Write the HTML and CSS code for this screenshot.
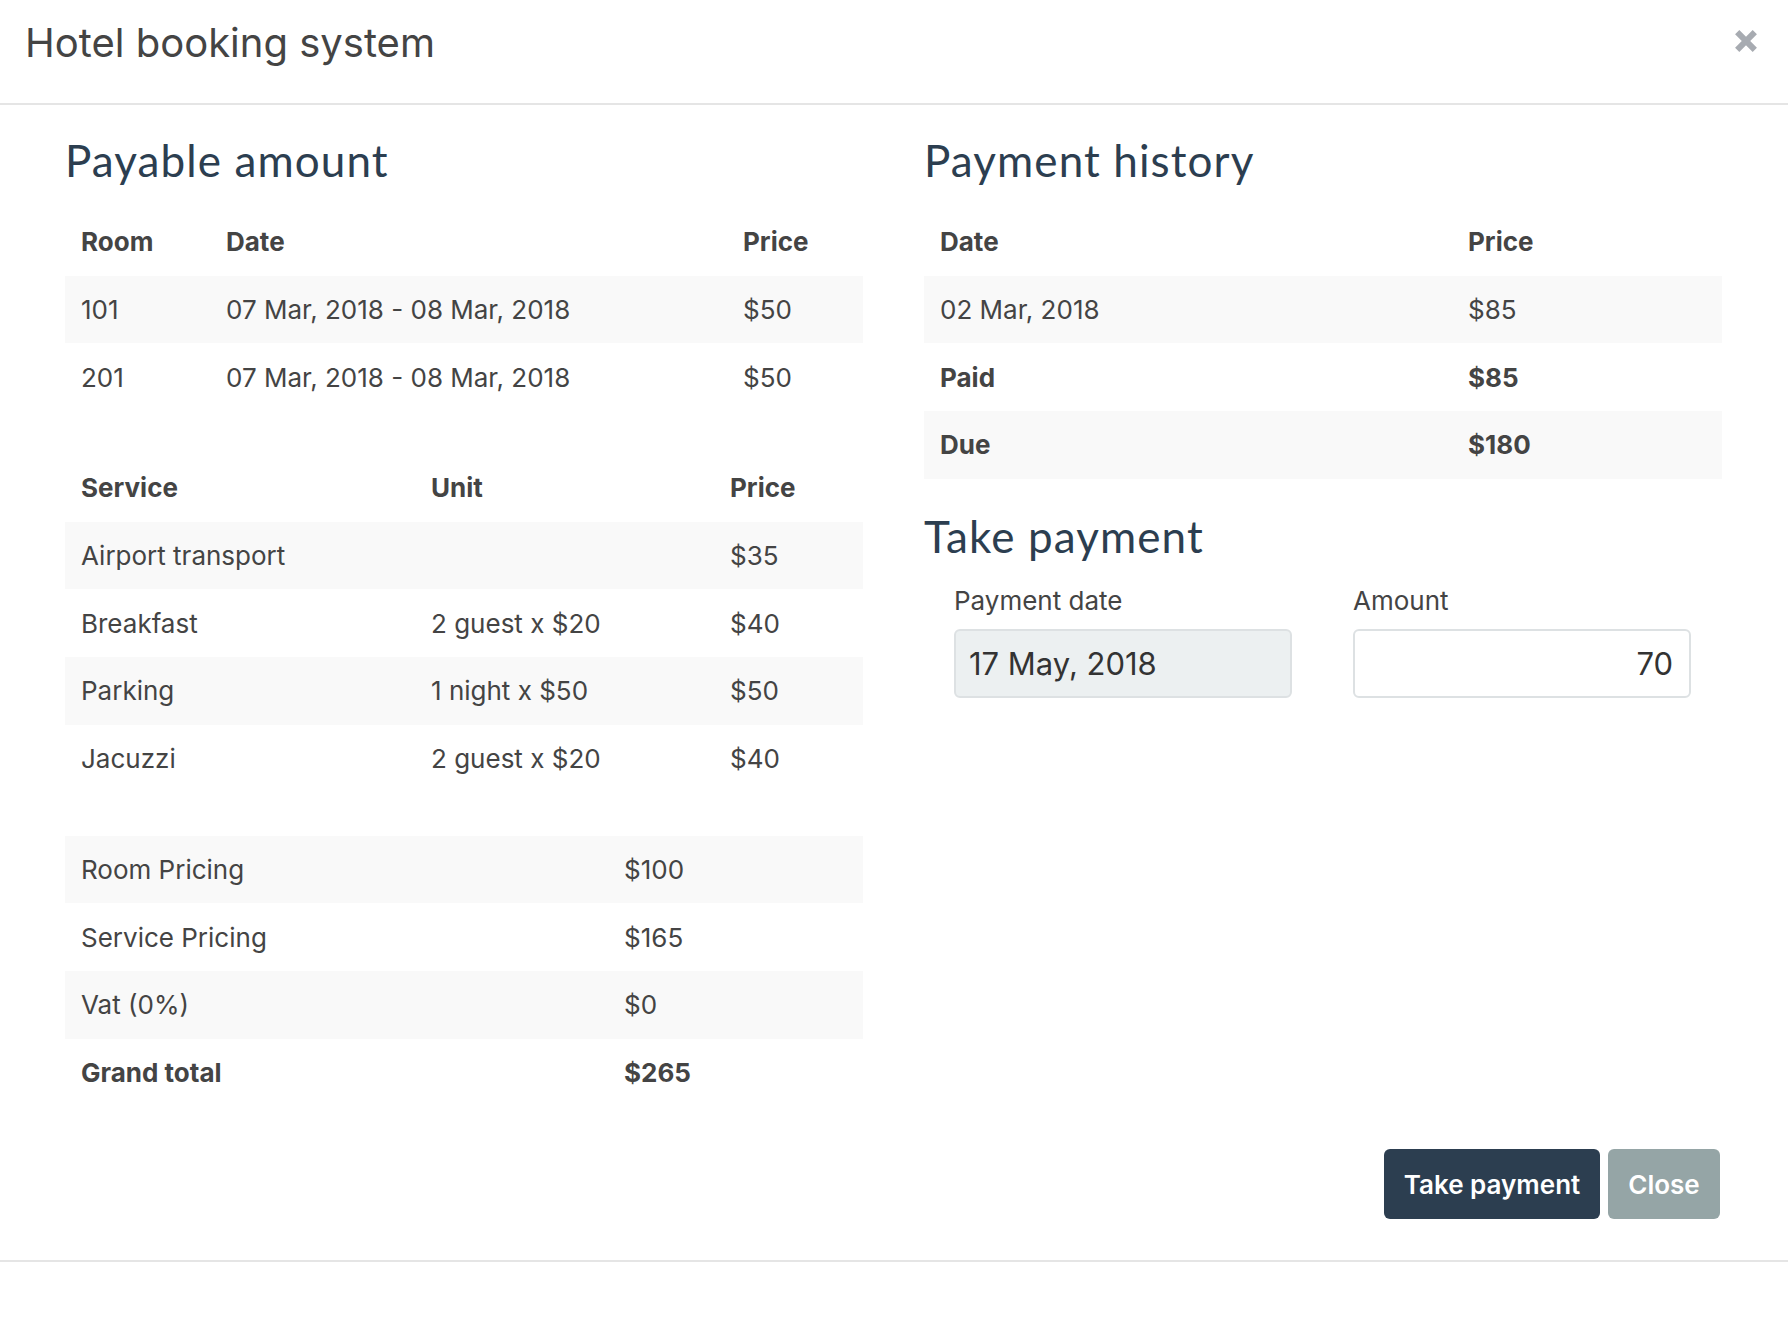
FILE: index.html
```html
<!DOCTYPE html>
<html lang="en">
<head>
<meta charset="utf-8">
<title>Hotel booking system</title>
<link rel="stylesheet" href="styles.css">
</head>
<body>
<div class="modal">
  <header class="modal-header">
    <h1 class="modal-title">Hotel booking system</h1>
    <button class="close" type="button" aria-label="Close">
      <svg width="22" height="22" viewBox="0 0 22 22"><path d="M2.2 2.2 L19.8 19.8 M19.8 2.2 L2.2 19.8" stroke="#a7abb1" stroke-width="6" fill="none"/></svg>
    </button>
  </header>
  <div class="modal-body">
    <div class="cols">
      <section class="col">
        <h2 class="heading">Payable amount</h2>
        <table class="tbl">
          <colgroup><col style="width:145px"><col style="width:517px"><col style="width:136px"></colgroup>
          <thead><tr><th>Room</th><th>Date</th><th>Price</th></tr></thead>
          <tbody>
            <tr><td>101</td><td>07 Mar, 2018 - 08 Mar, 2018</td><td>$50</td></tr>
            <tr><td>201</td><td>07 Mar, 2018 - 08 Mar, 2018</td><td>$50</td></tr>
          </tbody>
        </table>
        <table class="tbl">
          <colgroup><col style="width:350px"><col style="width:299px"><col style="width:149px"></colgroup>
          <thead><tr><th>Service</th><th>Unit</th><th>Price</th></tr></thead>
          <tbody>
            <tr><td>Airport transport</td><td></td><td>$35</td></tr>
            <tr><td>Breakfast</td><td>2 guest x $20</td><td>$40</td></tr>
            <tr><td>Parking</td><td>1 night x $50</td><td>$50</td></tr>
            <tr><td>Jacuzzi</td><td>2 guest x $20</td><td>$40</td></tr>
          </tbody>
        </table>
        <table class="tbl">
          <colgroup><col style="width:543px"><col style="width:255px"></colgroup>
          <tbody>
            <tr><td>Room Pricing</td><td>$100</td></tr>
            <tr><td>Service Pricing</td><td>$165</td></tr>
            <tr><td>Vat (0%)</td><td>$0</td></tr>
            <tr class="strong"><td>Grand total</td><td>$265</td></tr>
          </tbody>
        </table>
      </section>
      <section class="col">
        <h2 class="heading">Payment history</h2>
        <table class="tbl tbl-history">
          <colgroup><col style="width:528px"><col style="width:270px"></colgroup>
          <thead><tr><th>Date</th><th>Price</th></tr></thead>
          <tbody>
            <tr><td>02 Mar, 2018</td><td>$85</td></tr>
            <tr class="strong"><td>Paid</td><td>$85</td></tr>
            <tr class="strong"><td>Due</td><td>$180</td></tr>
          </tbody>
        </table>
        <h2 class="heading heading-sub">Take payment</h2>
        <div class="form-row">
          <div class="form-group">
            <label class="label" for="pdate">Payment date</label>
            <input class="input input-readonly" id="pdate" type="text" value="17 May, 2018" readonly>
          </div>
          <div class="form-group">
            <label class="label" for="amount">Amount</label>
            <input class="input input-amount" id="amount" type="text" value="70">
          </div>
        </div>
      </section>
    </div>
    <div class="actions">
      <button class="btn btn-primary" type="button">Take payment</button>
      <button class="btn btn-secondary" type="button">Close</button>
    </div>
  </div>
</div>
</body>
</html>
```

FILE: styles.css
```css
* { box-sizing: border-box; }
html, body { margin: 0; padding: 0; background: #fff; }
body {
  font-family: Inter, "Noto Sans", "Liberation Sans", sans-serif;
  color: #444;
}
.modal { width: 1788px; }

.modal-header {
  height: 105px;
  border-bottom: 2px solid #e5e5e5;
  display: flex;
  align-items: flex-start;
  justify-content: space-between;
  padding: 0 31px 0 25px;
}
.modal-title {
  margin: 0;
  padding-top: 20px;
  font-size: 40px;
  line-height: 46px;
  font-weight: 400;
  color: #444;
}
.close {
  margin-top: 30px;
  padding: 0;
  border: 0;
  background: none;
  width: 22px;
  height: 22px;
  display: block;
}
.close svg { display: block; }

.modal-body {
  padding: 30px 66px 41px 65px;
  border-bottom: 2px solid #e5e5e5;
}
.cols {
  display: grid;
  grid-template-columns: 798px 798px;
  column-gap: 61px;
}

.heading {
  margin: 0 0 23px;
  font-family: Lato, "Open Sans", sans-serif;
  font-weight: 400;
  font-size: 44px;
  line-height: 50px;
  color: #2c3e50;
  letter-spacing: 1.1px;
}
.heading-sub { margin-top: 0; margin-bottom: 24px; }

.tbl {
  width: 798px;
  table-layout: fixed;
  border-collapse: collapse;
  margin-bottom: 43px;
  font-size: 26px;
}
.tbl-history { margin-bottom: 32px; }
.tbl th, .tbl td {
  height: 67.7px;
  padding: 0 16px;
  text-align: left;
  vertical-align: middle;
  white-space: nowrap;
}
.tbl th { font-weight: 700; }
.tbl tbody tr:nth-child(odd) { background: #f9f9f9; }
.tbl tr.strong td { font-weight: 700; }

.form-row {
  display: grid;
  grid-template-columns: 339px 339px;
  column-gap: 60px;
  padding-left: 30px;
}
.form-group { display: flex; flex-direction: column; }
.label {
  font-size: 26px;
  line-height: 31px;
  margin-bottom: 13px;
  color: #444;
}
.input {
  width: 338px;
  height: 69px;
  border: 2px solid #dde1e3;
  border-radius: 6px;
  font-family: Inter, "Noto Sans", sans-serif;
  font-size: 31px;
  color: #333;
  padding: 0 16px 0 13px;
  background: #fff;
  outline: none;
}
.input-readonly { background: #ecf0f1; }
.input-amount { text-align: right; }

.actions {
  display: flex;
  justify-content: flex-end;
  gap: 8px;
  padding-right: 2px;
}
.btn {
  height: 70px;
  border: 0;
  border-radius: 6px;
  color: #fff;
  font-family: Inter, "Noto Sans", sans-serif;
  font-size: 26px;
  font-weight: 600;
  padding: 0;
  white-space: nowrap;
  text-align: center;
}
.btn-primary { background: #2c3e50; width: 216px; }
.btn-secondary { background: #95a5a6; width: 112px; }
```
